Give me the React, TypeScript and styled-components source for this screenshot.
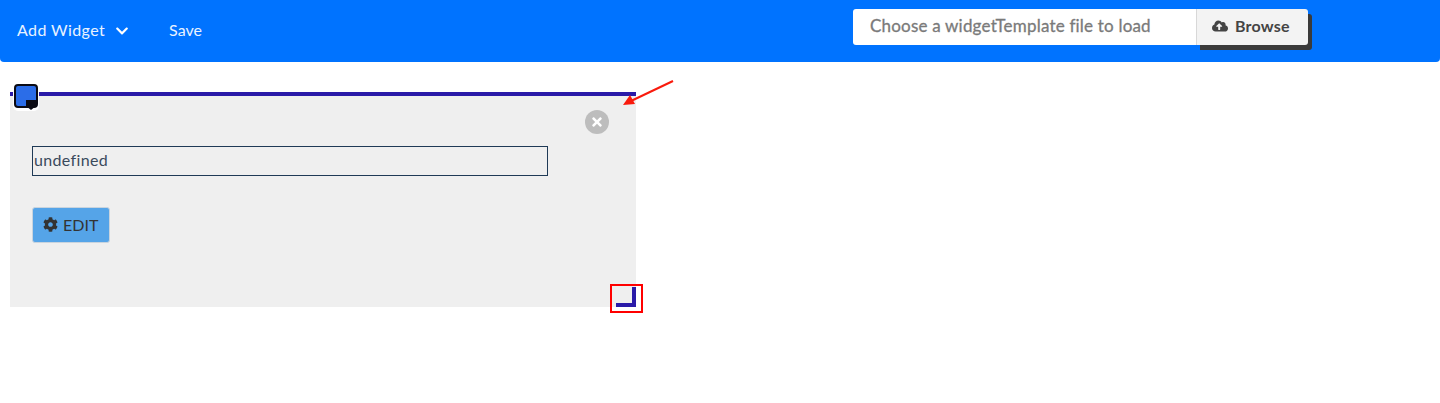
import { createGlobalStyle, styled } from 'styled-components';
import { FaChevronDown, FaCloudUploadAlt, FaCog, FaTimes } from 'react-icons/fa';

const GlobalStyle = createGlobalStyle`
  html, body {
    margin: 0;
    padding: 0;
    background: #fff;
    font-family: Lato, "Open Sans", sans-serif;
  }
`;

export default function App() {
  return (
    <>
      <GlobalStyle />
      <Navbar>
        <NavLink>
          <AddLabel>Add Widget</AddLabel>
          <FaChevronDown size={14} color="#fff" />
        </NavLink>
        <SaveLink>Save</SaveLink>
        <FilePicker>
          <FileName>Choose a widgetTemplate file to load</FileName>
          <BrowseButton>
            <FaCloudUploadAlt size={16} />
            Browse
          </BrowseButton>
        </FilePicker>
      </Navbar>
      <Canvas>
        <Widget>
          <DragHandle>
            <svg width="10" height="10" viewBox="0 0 10 10">
              <path d="M0 0h10v6l-5 4-5-4z" fill="#0b0b14" />
            </svg>
          </DragHandle>
          <CloseButton>
            <FaTimes size={14} />
          </CloseButton>
          <TitleInput readOnly value="undefined" />
          <EditButton>
            <FaCog size={15} />
            EDIT
          </EditButton>
          <Arrow width="52" height="26" viewBox="0 0 52 26">
            <path d="M51 1 L9 21" stroke="#f91a0c" strokeWidth="2" fill="none" />
            <path d="M1 25 L8 15 L13 24 Z" fill="#f91a0c" />
          </Arrow>
          <ResizeFrame>
            <ResizeCorner />
          </ResizeFrame>
        </Widget>
      </Canvas>
    </>
  );
}

const Navbar = styled.nav`
  display: flex;
  align-items: flex-start;
  box-sizing: border-box;
  height: 62px;
  padding: 9px 132px 0 17px;
  background: #0073ff;
  border-radius: 0 0 4px 4px;
`;
const NavLink = styled.a`
  display: flex;
  align-items: center;
  gap: 10px;
  margin-top: 10px;
  color: #e8f2ff;
  font-size: 16px;
  line-height: 22px;
  svg {
    margin-top: 2px;
  }
`;
const AddLabel = styled.span`
  letter-spacing: 0.4px;
`;
const SaveLink = styled(NavLink)`
  margin-left: 40px;
`;
const FilePicker = styled.div`
  display: flex;
  height: 36px;
  margin-left: auto;
  border-radius: 3px;
`;
const FileName = styled.div`
  box-sizing: border-box;
  width: 343px;
  padding-left: 17px;
  background: #fff;
  border-radius: 3px 0 0 3px;
  color: #7a7a7a;
  font-size: 17px;
  line-height: 34px;
  letter-spacing: 0.2px;
  -webkit-text-stroke: 0.3px #7a7a7a;
`;
const BrowseButton = styled.div`
  display: flex;
  align-items: center;
  gap: 7px;
  box-sizing: border-box;
  width: 112px;
  padding: 0 0 3px 15px;
  background: #f3f3f3;
  border-left: 1px solid #d8d8d8;
  border-radius: 0 3px 3px 0;
  box-shadow: 4px 5px 0 0 #3a3a3a;
  color: #444;
  font-size: 16px;
  font-weight: 700;
  letter-spacing: 0.2px;
`;
const Canvas = styled.main`
  box-sizing: border-box;
  min-height: 341px;
  padding: 30px 0 0 10px;
`;
const Widget = styled.section`
  position: relative;
  box-sizing: border-box;
  width: 626px;
  height: 215px;
  padding: 50px 0 0 22px;
  background: #efefef;
  border-top: 4px solid #2a1aa8;
`;
const DragHandle = styled.div`
  position: absolute;
  top: -12px;
  left: 4px;
  display: flex;
  align-items: flex-end;
  justify-content: flex-end;
  box-sizing: border-box;
  width: 24px;
  height: 24px;
  background: #2b6de8;
  border: 2px solid #0b0b14;
  border-radius: 4px;
  box-shadow: 0 0 0 1px #fff, 0 2px 0 1px #fff;
  svg {
    margin-bottom: -4px;
  }
`;
const CloseButton = styled.div`
  position: absolute;
  top: 14px;
  right: 27px;
  display: flex;
  align-items: center;
  justify-content: center;
  width: 24px;
  height: 24px;
  background: #bdbdbd;
  border-radius: 50%;
  color: #fff;
`;
const TitleInput = styled.input`
  display: block;
  box-sizing: border-box;
  width: 516px;
  height: 30px;
  padding: 0 1px 3px;
  background: transparent;
  border: 1px solid #1f3a56;
  border-radius: 0;
  color: #3a4a5c;
  font-family: inherit;
  font-size: 16px;
  letter-spacing: 0.35px;
  outline: none;
`;
const EditButton = styled.button`
  display: flex;
  align-items: center;
  gap: 5px;
  box-sizing: border-box;
  width: 78px;
  height: 36px;
  margin-top: 31px;
  padding: 0 0 2px 10px;
  background: #55a4e8;
  border: 1px solid #c9d4de;
  border-radius: 3px;
  color: #333;
  font-family: inherit;
  font-size: 16px;
`;
const Arrow = styled.svg`
  position: absolute;
  top: -16px;
  left: 612px;
`;
const ResizeFrame = styled.div`
  position: absolute;
  right: -7px;
  bottom: -6px;
  box-sizing: border-box;
  width: 33px;
  height: 29px;
  border: 2px solid #f00;
`;
const ResizeCorner = styled.div`
  position: absolute;
  top: 1px;
  left: 4px;
  box-sizing: border-box;
  width: 20px;
  height: 20px;
  border-right: 4px solid #2a1aa8;
  border-bottom: 4px solid #2a1aa8;
`;
